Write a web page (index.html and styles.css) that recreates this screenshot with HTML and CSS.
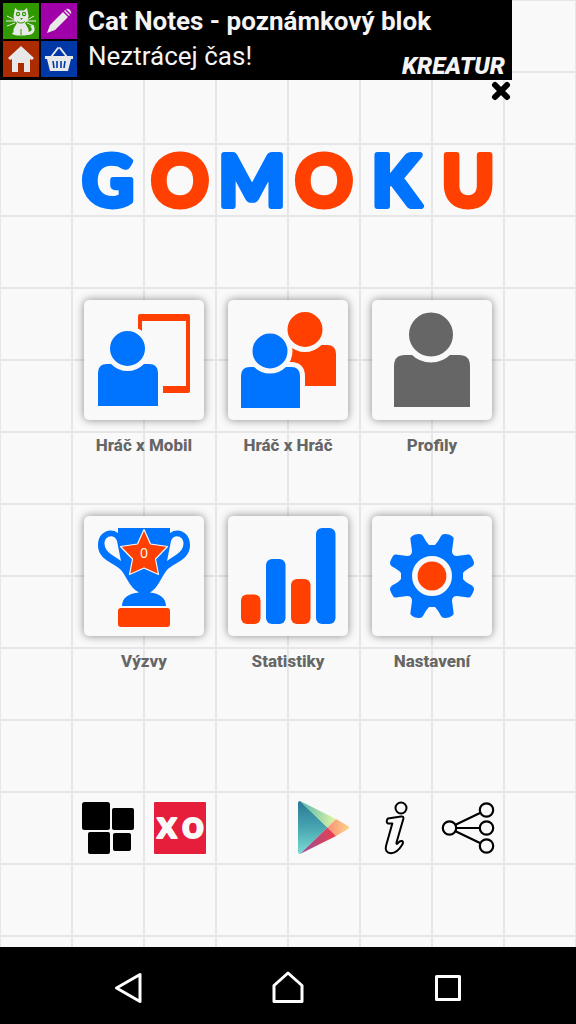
FILE: index.html
```html
<!DOCTYPE html>
<html lang="cs">
<head>
<meta charset="utf-8">
<meta name="viewport" content="width=device-width, initial-scale=1">
<title>Gomoku</title>
<link rel="stylesheet" href="styles.css">
</head>
<body>
<div class="app">
  <aside class="ad">
    <a class="banner" href="#">
      <span class="banner-icons">
        <svg class="sq green" viewBox="0 0 36 36"><g fill="#e8e8e8"><path d="M12 5l3 2.500h6L24 5l1.500 8-1 5-4 3h-5l-4-3-1-5zM14 20h8l3.500 6v5h-15v-5z"/><path d="M24 29c5 0 6-3 3-6l3-1c4 5 0 10-5 10z"/><ellipse cx="18" cy="30.500" rx="9" ry="2"/></g><path d="M12 17L4 13M12 18L3 18M12 20L4 23M24 17l7-4M24 18h9M24 20l7 3" stroke="#e8e8e8" fill="none"/><g fill="#309900"><circle cx="15" cy="11" r="2.200"/><circle cx="21" cy="11" r="2.200"/><path d="M17 15h3l-1.500 2zM14 18q4 3 8 0v1q-4 3-8 0zM17.500 26h1v6h-1z"/></g><circle cx="15" cy="11" r="1" fill="#e8e8e8"/><circle cx="21" cy="11" r="1" fill="#e8e8e8"/></svg>
        <svg class="sq purple" viewBox="0 0 36 36"><path fill="#e8e8e8" d="M6 30l3-8L22 9l5 5-13 13zM23 8l1-1 5 5-1 1zM25 6q2-1 4 1t1 4z"/></svg>
        <svg class="sq brick" viewBox="0 0 36 36"><path fill="#e8e8e8" d="M18 5l13 12-2 2-2-1v13h-6v-9h-6v9H9V18l-2 1-2-2z"/></svg>
        <svg class="sq blue" viewBox="0 0 36 36"><path fill="none" stroke="#e8e8e8" stroke-width="2" stroke-linecap="round" d="M10 16l7-9M26 16l-7-9"/><path fill="#e8e8e8" d="M4 15h28v3h-2l-3 12H9L6 18H4z"/><path stroke="#0038a8" stroke-width="1.600" d="M12 20l1 7M16 20v7M20 20v7M24 20l-1 7"/></svg>
      </span>
      <span class="banner-text">
        <strong class="banner-title">Cat Notes - poznámkový blok</strong>
        <span class="banner-sub">Neztrácej čas!</span>
      </span>
      <span class="brand">KREATUR</span>
    </a>
    <button class="close" aria-label="Zavřít reklamu"><svg viewBox="0 0 20 20"><path d="M4 4l12 12M16 4L4 16" stroke="#000" stroke-width="6" stroke-linecap="round"/></svg></button>
  </aside>

  <main class="menu">
    <h1 class="logo">
      <svg viewBox="0 0 432 72">
        <g class="letters" text-anchor="middle">
          <text x="36" y="62">G</text>
          <text class="red" x="108" y="62">O</text>
          <text x="180" y="62">M</text>
          <text class="red" x="252" y="62">O</text>
          <text x="324" y="62">K</text>
          <text class="red" x="396" y="62">U</text>
        </g>
      </svg>
    </h1>

    <div class="tiles">
      <button class="tile">
        <span class="card"><svg viewBox="0 0 120 120">
          <path fill="#ff4000" d="M54 16q0-2 2-2h48q2 0 2 2v75q0 2-2 2H79v-7h23V21H58v10l-4-2z"/>
          <path fill="#0073ff" d="M14 106V73q0-9 9-9h42q9 0 9 9v33z"/>
          <circle cx="43.500" cy="48.500" r="20" fill="#0073ff" stroke="#f9f9f9" stroke-width="5"/>
        </svg></span>
        <span class="label">Hráč x Mobil</span>
      </button>
      <button class="tile">
        <span class="card"><svg viewBox="0 0 120 120">
          <path fill="#ff4000" d="M48 86V54q0-9 9-9h42q9 0 9 9v32z"/>
          <circle cx="77" cy="29.500" r="20" fill="#ff4000" stroke="#f9f9f9" stroke-width="5"/>
          <path fill="#0073ff" stroke="#f9f9f9" stroke-width="10" paint-order="stroke" d="M13 108V76q0-9 9-9h41q9 0 9 9v32z"/>
          <circle cx="42" cy="51" r="20" fill="#0073ff" stroke="#f9f9f9" stroke-width="5"/>
        </svg></span>
        <span class="label">Hráč x Hráč</span>
      </button>
      <button class="tile">
        <span class="card"><svg viewBox="0 0 120 120">
          <path fill="#666" d="M22 107V66q0-11 11-11h54q11 0 11 11v41z"/>
          <circle cx="59" cy="34.500" r="25" fill="#666" stroke="#f9f9f9" stroke-width="6"/>
        </svg></span>
        <span class="label">Profily</span>
      </button>
      <button class="tile">
        <span class="card"><svg viewBox="0 0 120 120">
          <path fill="#0073ff" fill-rule="evenodd" d="M34 12H86V17C94 11 106 16 106 29C106 44 91 46 83 54C77 61 75 71 66 76.500C75 77 82 82 82 90H38C38 82 45 77 55 76.500C45 71 43 61 37 54C29 46 14 44 14 29C14 16 26 11 34 17ZM33 25C30 17 20 20 20.500 28C21 37 31 40 37 45ZM87 25C90 17 100 20 99.500 28C99 37 89 40 83 45Z"/>
          <rect x="34" y="92" width="52" height="19" rx="3" fill="#ff4000"/>
          <path fill="#ff4000" stroke="#f9f9f9" stroke-width="1.200" stroke-linejoin="round" d="M60 13.500l6.500 14.500 17 2.500L71.500 43l3 15.500L60 52l-14.500 6.500 3-15.500-12-12.500 17-2.500z"/>
          <text class="score" x="60" y="42" text-anchor="middle">0</text>
        </svg></span>
        <span class="label">Výzvy</span>
      </button>
      <button class="tile">
        <span class="card"><svg viewBox="0 0 120 120">
          <rect x="13" y="78.500" width="19.500" height="29.500" rx="6" fill="#ff4000"/>
          <rect x="38" y="43" width="19.500" height="65" rx="6" fill="#0073ff"/>
          <rect x="63" y="63" width="19.500" height="45" rx="6" fill="#ff4000"/>
          <rect x="88" y="12" width="19.500" height="96" rx="6" fill="#0073ff"/>
        </svg></span>
        <span class="label">Statistiky</span>
      </button>
      <button class="tile">
        <span class="card"><svg viewBox="0 0 120 120">
          <defs><path id="quarter" d="M0 0V-31H3Q6-34 9-40Q10-42 13-42Q18-42 21-39Q22-38 21.500-36L20-25Q20-20 25-20L36-21.500Q38-22 39-20Q42-15 42-13Q42-11 40-9.500Q33-6 31-3V0z"/></defs>
          <g fill="#0073ff" transform="translate(60 60)"><use href="#quarter"/><use href="#quarter" transform="scale(-1 1)"/><use href="#quarter" transform="rotate(180)"/><use href="#quarter" transform="scale(1 -1)"/></g>
          <circle cx="60" cy="60" r="17.200" fill="#ff4000" stroke="#f9f9f9" stroke-width="5.600"/>
        </svg></span>
        <span class="label">Nastavení</span>
      </button>
    </div>

    <div class="links">
      <button class="link apps" aria-label="Další aplikace"><svg viewBox="0 0 54 54"><rect x="1" y="1" width="28" height="28" rx="2.500"/><rect x="31" y="7" width="22" height="22" rx="2"/><rect x="7" y="31" width="22" height="22" rx="2"/><rect x="32" y="32" width="18" height="18" rx="2"/></svg></button>
      <button class="link" aria-label="Piškvorky"><svg viewBox="0 0 54 54"><rect x="1" y="1" width="52" height="52" rx="1" fill="#e61e3c"/><text class="xo" y="37" text-anchor="middle"><tspan x="14">x</tspan><tspan x="40">o</tspan></text></svg></button>
      <button class="link play" aria-label="Google Play"><svg viewBox="0 0 54 54">
        <defs>
          <linearGradient id="teal" x2="0" y2="1"><stop offset="0" stop-color="#2a7896"/><stop offset=".5" stop-color="#47a5b0"/><stop offset="1" stop-color="#7bdcd2"/></linearGradient>
          <linearGradient id="lime"><stop offset="0" stop-color="#50b9ad"/><stop offset="1" stop-color="#e4f5a4"/></linearGradient>
          <linearGradient id="peach"><stop offset="0" stop-color="#fa8f78"/><stop offset="1" stop-color="#fbd386"/></linearGradient>
          <linearGradient id="wine"><stop offset="0" stop-color="#91519a"/><stop offset="1" stop-color="#ed3e4b"/></linearGradient>
        </defs>
        <path fill="url(#teal)" d="M1 2Q1 0 3 0L30.500 26.500 3 53Q1 53 1 51z"/>
        <path fill="url(#lime)" d="M3 0L39 18l-8.500 8.500z"/>
        <path fill="url(#peach)" d="M39 18l12 7q2 1.500 0 3l-12 7-8.500-8.500z"/>
        <path fill="url(#wine)" d="M30.500 26.500L39 35 3 53z"/>
      </svg></button>
      <button class="link" aria-label="Informace"><svg viewBox="0 0 54 54"><g fill="none" stroke="#000" stroke-width="2" stroke-linejoin="round"><circle cx="32" cy="7" r="5.500"/><path d="M19 17.500L32 15.500Q35 15 34.300 18L27.500 41.500Q27 44 29 42Q31 39.500 33 40Q35 41 33 44C30 49 27 52 22 52.300C17.500 52 16 49 17 45L23.300 22.500H19Q17.500 22 17.800 20Q18 18 19 17.500z"/></g></svg></button>
      <button class="link" aria-label="Sdílet"><svg viewBox="0 0 54 54"><g fill="none" stroke="#000" stroke-width="2.200"><path d="M14 24L39 12M15 27h23M14 30l25 12"/><circle cx="8.500" cy="27" r="6.700"/><circle cx="45.500" cy="9" r="6.700"/><circle cx="45.500" cy="27" r="6.700"/><circle cx="45.500" cy="45" r="6.700"/></g></svg></button>
    </div>
  </main>

  <nav class="system-nav">
    <button aria-label="Zpět"><svg viewBox="0 0 36 36"><path d="M6.500 18L30 4.500v27z"/></svg></button>
    <button aria-label="Domů"><svg viewBox="0 0 36 36"><path d="M4 31.500V15.500L18 3l14 12.500v16z"/></svg></button>
    <button aria-label="Poslední aplikace"><svg viewBox="0 0 36 36"><path d="M6.500 6.500h23v23h-23z"/></svg></button>
  </nav>
</div>
</body>
</html>
```

FILE: styles.css
```css
* {
  box-sizing: border-box;
}

body {
  margin: 0;
  font-family: Roboto, "Noto Sans", sans-serif;
  background-color: #f9f9f9;
  background-image:
    linear-gradient(to right, #e6e6e6 1px, transparent 1px, transparent 71px, #e6e6e6 71px),
    linear-gradient(to bottom, #e6e6e6 1px, transparent 1px, transparent 71px, #e6e6e6 71px);
  background-size: 72px 72px;
}

button {
  padding: 0;
  border: 0;
  background: none;
  font: inherit;
  color: inherit;
  cursor: pointer;
}

svg {
  display: block;
  overflow: visible;
}

.app {
  display: flex;
  flex-direction: column;
  min-height: 100vh;
}

.ad {
  display: flex;
  flex-direction: column;
  align-items: flex-end;
  max-width: 512px;
}

.banner {
  display: flex;
  width: 100%;
  height: 80px;
  padding: 3px;
  background: #000;
  color: #f4f4f4;
  text-decoration: none;
}

.banner-icons {
  display: grid;
  grid-template-columns: 36px 36px;
  grid-template-rows: 36px 36px;
  gap: 2px;
}

.green { background: #309900; }
.purple { background: #a000a8; }
.brick { background: #ac2b00; }
.blue { background: #0038a8; }

.banner-text {
  display: flex;
  flex: 1;
  flex-direction: column;
  padding-left: 11px;
  white-space: nowrap;
}

.banner-title {
  font-size: 26px;
  line-height: 36px;
}

.banner-sub {
  font-size: 26px;
  line-height: 34px;
}

.brand {
  align-self: flex-end;
  width: 0;
  margin-right: 4px;
  display: flex;
  justify-content: flex-end;
  font-size: 24px;
  font-style: italic;
  font-weight: 900;
  line-height: 22px;
}

.close {
  width: 22px;
  padding: 1px;
}

.menu {
  padding: 42px 12.5% 0;
}

.logo {
  margin: 0;
}

.letters {
  font-family: Lato, sans-serif;
  font-size: 71px;
  font-weight: 700;
  fill: #0073ff;
  stroke: #0073ff;
  stroke-width: 6px;
  stroke-linejoin: round;
}

.letters .red {
  fill: #ff4000;
  stroke: #ff4000;
}

.tiles {
  display: grid;
  grid-template-columns: repeat(3, 1fr);
  row-gap: 60px;
  padding-top: 84px;
}

.tile {
  display: flex;
  flex-direction: column;
  align-items: center;
  gap: 12px;
}

.card {
  width: 120px;
  border-radius: 5px;
  background: #f9f9f9;
  box-shadow: 0 0 8px rgba(0, 0, 0, 0.45);
}

.label {
  padding-top: 2px;
  font-size: 17px;
  font-weight: 800;
  line-height: 22px;
  color: #666;
}

.score {
  font-family: "Noto Sans", sans-serif;
  font-size: 14px;
  fill: #f9f9f9;
}

.links {
  display: grid;
  grid-template-columns: repeat(6, 1fr);
  justify-items: center;
  padding: 129px 0 24px;
}

.link {
  width: 54px;
}

.play {
  grid-column: 4;
}

.xo {
  font-family: Lato, sans-serif;
  font-size: 38px;
  font-weight: 700;
  fill: #f9f9f9;
  stroke: #f9f9f9;
  stroke-width: 2px;
  stroke-linejoin: round;
}

.system-nav {
  display: grid;
  grid-template-columns: repeat(3, 1fr);
  justify-items: center;
  margin-top: auto;
  padding: 23px 48px 18px;
  background: #000;
}

.system-nav svg {
  width: 36px;
  fill: none;
  stroke: #fff;
  stroke-width: 3;
  stroke-linejoin: round;
}
```
